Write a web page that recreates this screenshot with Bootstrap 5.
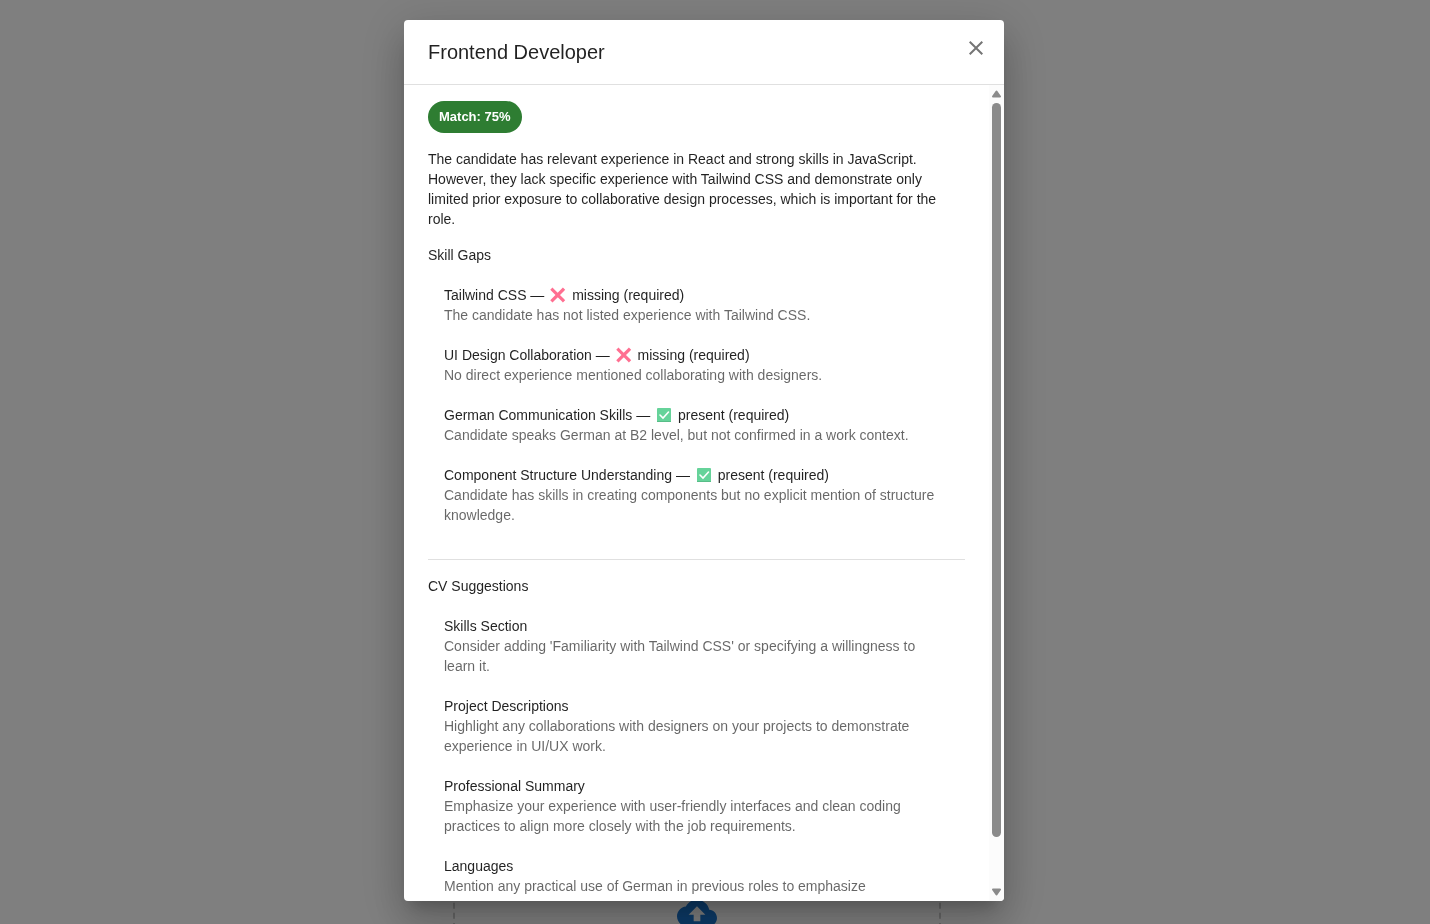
<!DOCTYPE html>
<html lang="en">
<head>
<meta charset="utf-8">
<meta name="viewport" content="width=device-width, initial-scale=1">
<title>Frontend Developer</title>
<link href="https://cdn.jsdelivr.net/npm/bootstrap@5.3.0/dist/css/bootstrap.min.css" rel="stylesheet">
<style>
  body { font-family: "Liberation Sans", Arial, sans-serif; font-size: 14px; line-height: 20px; color: rgba(0,0,0,.87); background: #fff; }
  .page-main { padding: 20px 36px 0 0; }
  .upload-zone { width: 488px; height: 300px; margin-top: 761px; border: 2px dashed #ccc; }
  .upload-zone svg { margin-top: 110px; }
  .overlay { background: rgba(0,0,0,.5); padding: 20px 22px 23px 0; z-index: 1050; }
  .dialog { width: 600px; max-width: 100%; border-radius: 4px; background: #fff;
    box-shadow: 0 11px 15px -7px rgba(0,0,0,.2), 0 24px 38px 3px rgba(0,0,0,.14), 0 9px 46px 8px rgba(0,0,0,.12); }
  .dialog-head { height: 65px; padding: 0 16px 0 24px; border-bottom: 1px solid rgba(0,0,0,.12); }
  .dialog-head h2 { font-size: 20px; line-height: 32px; }
  .close-btn { width: 24px; height: 24px; margin-bottom: 8px; color: #757575; }
  .dialog-body { padding: 16px 24px; }
  .match-chip { height: 32px; padding: 0 11px; border-radius: 16px; background: #2e7d32; font-size: 13px; line-height: 32px; }
  .section-title { font-size: 14px; line-height: 20px; }
  .entries { padding: 10px 16px; }
  .entries li { padding: 10px 0; }
  .entries h4 { font-size: 14px; line-height: 20px; }
  .entries p { color: rgba(0,0,0,.6); }
  .state-icon { width: 20px; height: 16px; vertical-align: -3px; }
  .divider { height: 1px; margin: 14px 0 16px; background: rgba(0,0,0,.12); }
  .track { width: 15px; padding: 5px 3px 5px; background: #fcfcfc; border-bottom-right-radius: 4px; }
  .track .thumb { width: 9px; height: 734px; margin-top: 5px; border-radius: 5px; background: #8b8b8b; }
</style>
</head>
<body class="vh-100 overflow-hidden">
<main class="page-main vh-100 overflow-hidden">
  <div class="upload-zone mx-auto text-center">
    <svg width="40" height="40" viewBox="0 0 24 24" fill="#1976d2" aria-hidden="true"><path d="M19.35 10.04C18.67 6.59 15.64 4 12 4 9.11 4 6.6 5.64 5.35 8.04 2.34 8.36 0 10.91 0 14c0 3.31 2.69 6 6 6h13c2.76 0 5-2.24 5-5 0-2.64-2.05-4.78-4.65-4.96zM14 13v4h-4v-4H7l5-5 5 5h-3z"/></svg>
  </div>
</main>

<svg class="d-none" aria-hidden="true">
  <symbol id="missing" viewBox="0 0 20 16"><path d="M4.500 2.800L14.900 13.200M14.900 2.800L4.500 13.200" fill="none" stroke="#ff6f91" stroke-width="3.200" stroke-linecap="square"/></symbol>
  <symbol id="present" viewBox="0 0 20 16"><rect x="3" y="1" width="14" height="14" rx="1" fill="#66d39a"/><path d="M3 14.500h14" stroke="#58bd88"/><path d="M6 8l3 3 5.500-6" fill="none" stroke="#fff" stroke-width="1.600" stroke-linecap="round"/></symbol>
</svg>

<div class="overlay position-fixed top-0 start-0 w-100 h-100 d-flex justify-content-center">
  <div class="dialog h-100 d-flex flex-column" role="dialog" aria-modal="true" aria-labelledby="dialog-title">
    <header class="dialog-head d-flex align-items-center justify-content-between flex-shrink-0">
      <h2 id="dialog-title" class="fw-normal m-0">Frontend Developer</h2>
      <button type="button" class="close-btn btn border-0 p-0 d-flex" aria-label="Close">
        <svg width="24" height="24" viewBox="0 0 24 24" fill="currentColor"><path d="M19 6.410L17.590 5 12 10.590 6.410 5 5 6.410 10.590 12 5 17.590 6.410 19 12 13.410 17.590 19 19 17.590 13.410 12z"/></svg>
      </button>
    </header>
    <div class="d-flex flex-grow-1 overflow-hidden">
      <div class="dialog-body flex-grow-1 overflow-hidden">
        <span class="match-chip d-inline-block align-top text-white fw-bold">Match: 75%</span>
        <p class="my-3">The candidate has relevant experience in React and strong skills in JavaScript. However, they lack specific experience with Tailwind CSS and demonstrate only limited prior exposure to collaborative design processes, which is important for the role.</p>
        <h3 class="section-title fw-normal m-0">Skill Gaps</h3>
        <ul class="entries list-unstyled m-0">
          <li><h4 class="fw-normal m-0">Tailwind CSS — <svg class="state-icon"><use href="#missing"/></svg> missing (required)</h4><p class="m-0">The candidate has not listed experience with Tailwind CSS.</p></li>
          <li><h4 class="fw-normal m-0">UI Design Collaboration — <svg class="state-icon"><use href="#missing"/></svg> missing (required)</h4><p class="m-0">No direct experience mentioned collaborating with designers.</p></li>
          <li><h4 class="fw-normal m-0">German Communication Skills — <svg class="state-icon"><use href="#present"/></svg> present (required)</h4><p class="m-0">Candidate speaks German at B2 level, but not confirmed in a work context.</p></li>
          <li><h4 class="fw-normal m-0">Component Structure Understanding — <svg class="state-icon"><use href="#present"/></svg> present (required)</h4><p class="m-0">Candidate has skills in creating components but no explicit mention of structure knowledge.</p></li>
        </ul>
        <div class="divider"></div>
        <h3 class="section-title fw-normal m-0">CV Suggestions</h3>
        <ul class="entries list-unstyled m-0">
          <li><h4 class="fw-normal m-0">Skills Section</h4><p class="m-0">Consider adding 'Familiarity with Tailwind CSS' or specifying a willingness to learn it.</p></li>
          <li><h4 class="fw-normal m-0">Project Descriptions</h4><p class="m-0">Highlight any collaborations with designers on your projects to demonstrate experience in UI/UX work.</p></li>
          <li><h4 class="fw-normal m-0">Professional Summary</h4><p class="m-0">Emphasize your experience with user-friendly interfaces and clean coding practices to align more closely with the job requirements.</p></li>
          <li><h4 class="fw-normal m-0">Languages</h4><p class="m-0">Mention any practical use of German in previous roles to emphasize</p></li>
        </ul>
      </div>
      <div class="track d-flex flex-column justify-content-between flex-shrink-0" aria-hidden="true">
        <div>
          <svg class="d-block" width="9" height="8" viewBox="0 0 9 8"><path d="M4.500 1.500L8 6.500H1z" fill="#8b8b8b" stroke="#8b8b8b" stroke-width="2" stroke-linejoin="round"/></svg>
          <div class="thumb"></div>
        </div>
        <svg class="d-block" width="9" height="8" viewBox="0 0 9 8"><path d="M4.500 6.500L8 1.500H1z" fill="#8b8b8b" stroke="#8b8b8b" stroke-width="2" stroke-linejoin="round"/></svg>
      </div>
    </div>
  </div>
</div>
<script src="https://cdn.jsdelivr.net/npm/bootstrap@5.3.0/dist/js/bootstrap.bundle.min.js"></script>
</body>
</html>
